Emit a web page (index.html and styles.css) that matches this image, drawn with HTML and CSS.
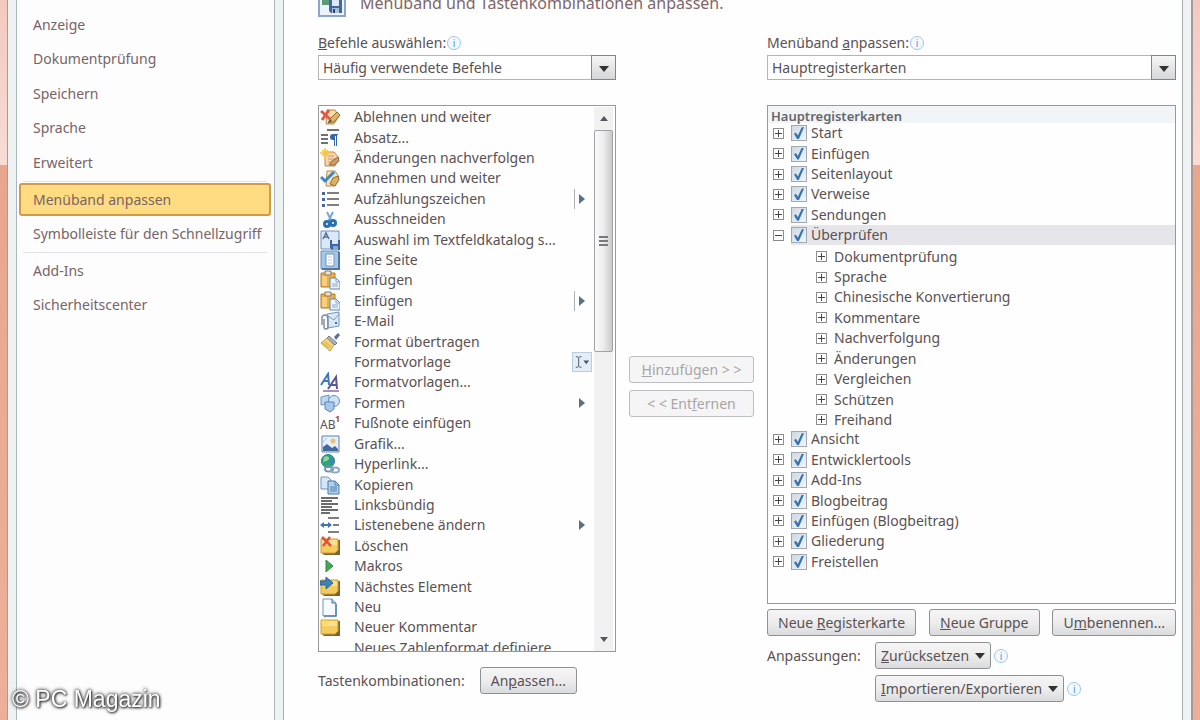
FILE: index.html
```html
<!DOCTYPE html>
<html lang="de">
  <head>
    <meta charset="utf-8" />
    <title>Menüband anpassen</title>
    <link rel="stylesheet" href="styles.css">
  </head>
  <body>
    <div class="window">
      <nav class="sidebar">
        <div class="nav-group">
          <a href="#">Anzeige</a>
          <a href="#">Dokumentprüfung</a>
          <a href="#">Speichern</a>
          <a href="#">Sprache</a>
          <a href="#">Erweitert</a>
        </div>
        <hr>
        <a href="#" class="active">Menüband anpassen</a>
        <a href="#">Symbolleiste für den Schnellzugriff</a>
        <hr>
        <a href="#">Add-Ins</a>
        <a href="#">Sicherheitscenter</a>
      </nav>

      <main class="content">
        <header class="page-header">
          <svg class="page-icon" viewBox="0 0 28 28">
            <rect x="1" y="1" width="26" height="26" fill="#edf3fa" stroke="#8ba6cb" stroke-width="2"/>
            <path d="M4 8h7v8H4z" fill="#5c9a78"/>
            <path d="M11 11h13v13H13l-2-2z" fill="#41679d"/>
            <path d="M14 11h7v6h-7z" fill="#dce8f5"/>
            <path d="M14 19h7v5h-7z" fill="#a9c0dd"/>
            <path d="M15 20h2v4h-2z" fill="#2b4777"/>
          </svg>
          <h1>Menüband und Tastenkombinationen anpassen.</h1>
        </header>

        <div class="columns">
          <!-- Available commands -->
          <section class="commands">
            <div class="field-label">
              <label for="command-source"><u>B</u>efehle auswählen:</label>
              <span class="info">i</span>
            </div>
            <div class="dropdown">
              <select id="command-source">
                <option>Häufig verwendete Befehle</option>
              </select>
              <span class="dropdown-arrow"></span>
            </div>

            <div class="listbox command-box">
              <ul class="command-list">
                <li>
                  <svg viewBox="0 0 20 20"><path d="M7 3h8l4 6-5 8H6z" fill="#f7dfa4" stroke="#b98b4b"/><path d="M8 16l3-5 6-6 3 3-6 7z" fill="#e7b45c" stroke="#8a6a3c"/><path d="M8 16l2-4 2 2z" fill="#556"/><path d="M1 4l9 8M9 3l-7 10" stroke="#dc5a47" stroke-width="3"/></svg>
                  <span>Ablehnen und weiter</span>
                </li>
                <li>
                  <svg viewBox="0 0 20 20"><path d="M7 2h12M1 7h7M1 11h7M1 15h7" stroke="#444" stroke-width="1.5"/><path d="M18 6h-5a3 3 0 0 0 0 6h1v6h1V8h1v10h1V7h1z" fill="#3568a8"/></svg>
                  <span>Absatz...</span>
                </li>
                <li>
                  <svg viewBox="0 0 20 20"><path d="M5 4h9l5 6-4 8H5z" fill="#f6d8a8" stroke="#c1895a"/><path d="M8 8h6M8 11h8M8 14h6" stroke="#d49678"/><path d="M9 17l3-4 6-4 1 4-5 4z" fill="#d99c58" stroke="#8d6a4e"/><path d="M5 0v11M0 5h11M2 2l6 6M8 2L2 8" stroke="#f7c542" stroke-width="1.5"/></svg>
                  <span>Änderungen nachverfolgen</span>
                </li>
                <li>
                  <svg viewBox="0 0 20 20"><path d="M7 3h8l4 6-5 9H6z" fill="#f3e4be" stroke="#b98b4b"/><path d="M10 16l3-6 5-2 1 4-4 6z" fill="#deb05e" stroke="#8a6a3c"/><path d="M1 9l4 4 9-9" fill="none" stroke="#3f86c4" stroke-width="3"/></svg>
                  <span>Annehmen und weiter</span>
                </li>
                <li>
                  <svg viewBox="0 0 20 20"><path d="M7 4h12M7 10h12M7 16h12" stroke="#555" stroke-width="1.5"/><path d="M2 3h3v3H2zM2 9h3v3H2zM2 15h3v3H2z" fill="#46679c"/></svg>
                  <span>Aufzählungszeichen</span>
                  <i class="submenu split"></i>
                </li>
                <li>
                  <svg viewBox="0 0 20 20"><path d="M7 3l5 10M13 3L8 13" stroke="#77a8cf" stroke-width="2"/><circle cx="7" cy="15" r="2.500" fill="none" stroke="#2770b5" stroke-width="3"/><circle cx="13" cy="14" r="2.500" fill="none" stroke="#2770b5" stroke-width="3"/></svg>
                  <span>Ausschneiden</span>
                </li>
                <li>
                  <svg viewBox="0 0 20 20"><path d="M1 1h18v18H1z" fill="#dbe9f7" stroke="#6f93bf"/><path d="M3 9l3-6 3 6M4 7h4" fill="none" stroke="#566f94" stroke-width="1.500"/><path d="M10 10h10v10H12l-2-2z" fill="#3c66a8"/><path d="M12 10h6v4h-6z" fill="#dce7f5"/><path d="M13 16h5v4h-5z" fill="#8ea9cf"/></svg>
                  <span>Auswahl im Textfeldkatalog s...</span>
                </li>
                <li>
                  <svg viewBox="0 0 20 20"><path d="M1 1h18v18H1z" fill="#a6c6e6" stroke="#6b92bd"/><path d="M19 2v17H2" fill="none" stroke="#4d77a6" stroke-width="2"/><path d="M6 4h8v12H6z" fill="#fff" stroke="#6f93bf"/><path d="M8 7h4M8 10h4M8 13h4" stroke="#b4cce4"/></svg>
                  <span>Eine Seite</span>
                </li>
                <li>
                  <svg viewBox="0 0 20 20"><g id="paste-icon"><path d="M1 3h14v14H1z" fill="#e6b04c" stroke="#b67d27"/><path d="M5 1h6v4H5z" fill="#e9e3d4" stroke="#8c7a59"/><path d="M2 6h5v10H2z" fill="#f5cf7c"/><path d="M10 8h6l4 4v7H10z" fill="#eef4fb" stroke="#6384ac"/><path d="M16 8v4h4M12 14h6M12 16h6" fill="none" stroke="#8fa9c8"/></g></svg>
                  <span>Einfügen</span>
                </li>
                <li>
                  <svg viewBox="0 0 20 20"><use href="#paste-icon"/></svg>
                  <span>Einfügen</span>
                  <i class="submenu split"></i>
                </li>
                <li>
                  <svg viewBox="0 0 20 20"><path d="M7 3l12-2v14l-11 2z" fill="#d9e8f6" stroke="#7095bb"/><path d="M8 5l6 4 5-6" fill="none" stroke="#7b9fc4"/><path d="M15 11h2v2h-2z" fill="#496f9f"/><path d="M2 14V7a3 3 0 0 1 6 0v9a2 2 0 0 1-4 0V8" fill="none" stroke="#7f8ea3" stroke-width="1.500"/></svg>
                  <span>E-Mail</span>
                </li>
                <li>
                  <svg viewBox="0 0 20 20"><path d="M14 5l4-4 2 2-4 5z" fill="#5d6e96"/><path d="M9 4l8 7-2 2-8-7z" fill="#a9b3c5" stroke="#707c95"/><path d="M7 6l7 7-4 6-9-8z" fill="#f3d377" stroke="#c99a3a"/><path d="M3 11l6 5M5 10l6 5" stroke="#d8a945"/></svg>
                  <span>Format übertragen</span>
                </li>
                <li>
                  <svg viewBox="0 0 20 20"></svg>
                  <span>Formatvorlage</span>
                  <i class="edit-mark"><svg viewBox="0 0 19 19"><path d="M3 4h2l1 1 1-1h2M3 15h2l1-1 1 1h2M6 5v9" fill="none" stroke="#44566a"/><path d="M11 8h6l-3 4z" fill="#44566a"/></svg></i>
                </li>
                <li>
                  <svg viewBox="0 0 20 20"><path d="M1 13L8 2l1 11M4 9h5" fill="none" stroke="#3b78bd" stroke-width="2"/><path d="M8 17l8-12 1 12M11 13h6" fill="none" stroke="#5b5796" stroke-width="2"/><path d="M3 19h16" stroke="#8a68b5" stroke-width="1.500"/></svg>
                  <span>Formatvorlagen...</span>
                </li>
                <li>
                  <svg viewBox="0 0 20 20"><path d="M1 4l8-2v9l-8 1z" fill="#bcd6ee" stroke="#6a93bf"/><circle cx="14" cy="8" r="5.500" fill="#cfe2f4" stroke="#6a93bf"/><path d="M5 9h9v7l-4 3-5-3z" fill="#a5c7e8" stroke="#5a87b8"/></svg>
                  <span>Formen</span>
                  <i class="submenu"></i>
                </li>
                <li>
                  <svg viewBox="0 0 20 20"><text x="0" y="16" class="ab">AB</text><text x="15" y="9" class="ab-note">1</text></svg>
                  <span>Fußnote einfügen</span>
                </li>
                <li>
                  <svg viewBox="0 0 20 20"><path d="M2 2h17v16H2z" fill="#e6f0f9" stroke="#5d81ae"/><path d="M3 17v-4l4-3 5 4 3-2 3 3v2z" fill="#426a9c"/><circle cx="13" cy="7" r="2.500" fill="#efbd78"/><path d="M3 8l4-4" stroke="#a9c5e0"/></svg>
                  <span>Grafik...</span>
                </li>
                <li>
                  <svg viewBox="0 0 20 20"><circle cx="8" cy="7" r="6.500" fill="#2fa66c" stroke="#2f7b86"/><path d="M4 3c3-2 6 0 5 2s-4 2-6 3z" fill="#8ad7a7"/><path d="M9 3l4 2 1 4-3 3z" fill="#3a87b8"/><ellipse cx="9" cy="15" rx="4" ry="2.500" fill="none" stroke="#6f91b4" stroke-width="2"/><ellipse cx="15" cy="16" rx="4" ry="2.500" fill="none" stroke="#8ba8c4" stroke-width="2"/></svg>
                  <span>Hyperlink...</span>
                </li>
                <li>
                  <svg viewBox="0 0 20 20"><path d="M1 2h7l3 3v9H1z" fill="#d5e6f6" stroke="#6d96c2"/><path d="M8 6h7l4 4v9H8z" fill="#b3d1ed" stroke="#4679ad"/><path d="M15 6v4h4M10 12h7M10 14h7M10 16h7" fill="none" stroke="#4f80b1"/></svg>
                  <span>Kopieren</span>
                </li>
                <li>
                  <svg viewBox="0 0 20 20"><path d="M1 3h17M1 6h11M1 9h17M1 12h11M1 15h17M1 18h9" stroke="#3d3d3d" stroke-width="1.500"/></svg>
                  <span>Linksbündig</span>
                </li>
                <li>
                  <svg viewBox="0 0 20 20"><path d="M8 3h11M13 10h6M8 17h11" stroke="#555" stroke-width="1.500"/><path d="M2 10h9" stroke="#3e76ae" stroke-width="2"/><path d="M0 10l4-3v6zM12 10L8 7v6z" fill="#3e76ae"/></svg>
                  <span>Listenebene ändern</span>
                  <i class="submenu"></i>
                </li>
                <li>
                  <svg viewBox="0 0 20 20"><g id="note-icon"><path d="M3 4h17v15H4l-2-2z" fill="#7d6438"/><path d="M1 3h17v11l-3 3H1z" fill="#f4cc5e" stroke="#cf9c37"/><path d="M2 4h15v5H2z" fill="#fae091"/></g><path d="M2 1l9 9M10 1L3 10" stroke="#dd5535" stroke-width="2.500"/></svg>
                  <span>Löschen</span>
                </li>
                <li>
                  <svg viewBox="0 0 20 20"><path d="M6 4l7 6-7 6z" fill="#43a850" stroke="#348a43"/></svg>
                  <span>Makros</span>
                </li>
                <li>
                  <svg viewBox="0 0 20 20"><use href="#note-icon"/><path d="M0 4h6V0l7 6-7 6V8H0z" fill="#3a83b9" stroke="#2a6797"/></svg>
                  <span>Nächstes Element</span>
                </li>
                <li>
                  <svg viewBox="0 0 20 20"><path d="M3 2h9l4 4v13H3z" fill="#f6fafe" stroke="#6c93bf"/><path d="M12 2v4h4" fill="#c3d9ee" stroke="#3f6ea4"/><path d="M16 7v12H4" fill="none" stroke="#5582b4" stroke-width="1.500"/></svg>
                  <span>Neu</span>
                </li>
                <li>
                  <svg viewBox="0 0 20 20"><use href="#note-icon"/><path d="M5 0v9M0 5h10M2 2l6 6M8 2L2 8" stroke="#f9d75e"/></svg>
                  <span>Neuer Kommentar</span>
                </li>
                <li>
                  <svg viewBox="0 0 20 20"></svg>
                  <span>Neues Zahlenformat definiere</span>
                </li>
              </ul>
              <div class="scrollbar">
                <span class="scroll-up"></span>
                <span class="scroll-thumb"></span>
                <span class="scroll-down"></span>
              </div>
            </div>

            <div class="shortcut-row">
              <span>Tastenkombinationen:</span>
              <button type="button" class="btn">An<u>p</u>assen...</button>
            </div>
          </section>

          <div class="transfer">
            <button type="button" class="btn" disabled><u>H</u>inzufügen &gt; &gt;</button>
            <button type="button" class="btn" disabled>&lt; &lt; Ent<u>f</u>ernen</button>
          </div>

          <!-- Ribbon tabs -->
          <section class="ribbon">
            <div class="field-label">
              <label for="ribbon-source">Menüband <u>a</u>npassen:</label>
              <span class="info">i</span>
            </div>
            <div class="dropdown">
              <select id="ribbon-source">
                <option>Hauptregisterkarten</option>
              </select>
              <span class="dropdown-arrow"></span>
            </div>

            <div class="listbox tree-box">
              <h2>Hauptregisterkarten</h2>
              <ul class="tree">
                <li><i class="expander"></i><label><input type="checkbox" checked>Start</label></li>
                <li><i class="expander"></i><label><input type="checkbox" checked>Einfügen</label></li>
                <li><i class="expander"></i><label><input type="checkbox" checked>Seitenlayout</label></li>
                <li><i class="expander"></i><label><input type="checkbox" checked>Verweise</label></li>
                <li><i class="expander"></i><label><input type="checkbox" checked>Sendungen</label></li>
                <li class="selected"><i class="expander open"></i><label><input type="checkbox" checked>Überprüfen</label></li>
                <li class="child"><i class="expander"></i>Dokumentprüfung</li>
                <li class="child"><i class="expander"></i>Sprache</li>
                <li class="child"><i class="expander"></i>Chinesische Konvertierung</li>
                <li class="child"><i class="expander"></i>Kommentare</li>
                <li class="child"><i class="expander"></i>Nachverfolgung</li>
                <li class="child"><i class="expander"></i>Änderungen</li>
                <li class="child"><i class="expander"></i>Vergleichen</li>
                <li class="child"><i class="expander"></i>Schützen</li>
                <li class="child"><i class="expander"></i>Freihand</li>
                <li><i class="expander"></i><label><input type="checkbox" checked>Ansicht</label></li>
                <li><i class="expander"></i><label><input type="checkbox" checked>Entwicklertools</label></li>
                <li><i class="expander"></i><label><input type="checkbox" checked>Add-Ins</label></li>
                <li><i class="expander"></i><label><input type="checkbox" checked>Blogbeitrag</label></li>
                <li><i class="expander"></i><label><input type="checkbox" checked>Einfügen (Blogbeitrag)</label></li>
                <li><i class="expander"></i><label><input type="checkbox" checked>Gliederung</label></li>
                <li><i class="expander"></i><label><input type="checkbox" checked>Freistellen</label></li>
              </ul>
            </div>

            <div class="ribbon-actions">
              <button type="button" class="btn">Neue <u>R</u>egisterkarte</button>
              <button type="button" class="btn"><u>N</u>eue Gruppe</button>
              <button type="button" class="btn">U<u>m</u>benennen...</button>
            </div>
            <div class="customize">
              <span class="customize-label">Anpassungen:</span>
              <div class="customize-row">
                <button type="button" class="btn menu"><span><u>Z</u>urücksetzen</span></button>
                <span class="info">i</span>
              </div>
              <div class="customize-row">
                <button type="button" class="btn menu"><span><u>I</u>mportieren/Exportieren</span></button>
                <span class="info">i</span>
              </div>
            </div>
          </section>
        </div>
      </main>
    </div>

    <div class="watermark">© PC Magazin</div>
  </body>
</html>
```

FILE: styles.css
```css
* {
  box-sizing: border-box;
}

body {
  margin: 0;
  height: 100vh;
  overflow: hidden;
  padding: 0 7px;
  font-family: "Noto Sans", "Segoe UI", sans-serif;
  font-size: 14px;
  line-height: 20px;
  color: #5a5153;
  background: linear-gradient(#f2c9c0, #f8dcd5 165px, #e9a68e 165px, #ecb09a);
}

ul {
  list-style: none;
  margin: 0;
  padding: 0;
}

.window {
  display: flex;
  gap: 8px;
  height: 100%;
  padding: 0 8px;
  background: #eff2f3;
  border: solid #a89a9a;
  border-width: 0 2px 0 1px;
}

/* Sidebar */
.sidebar {
  width: 259px;
  flex: none;
  padding: 8px 3px 0 2px;
  background: #fdfdfd;
  border: solid #a9b6bd;
  border-width: 0 1px;
}

.nav-group {
  display: grid;
  grid-auto-rows: 1fr;
  height: 172px;
}

.sidebar a {
  display: flex;
  align-items: center;
  height: 34px;
  padding: 0 14px;
  color: #786467;
  text-decoration: none;
  white-space: nowrap;
}

.sidebar hr {
  margin: 1px 4px;
  border: 0;
  border-top: 1px solid #e2e2e4;
}

.sidebar a.active {
  height: 33px;
  margin-bottom: 1px;
  padding: 0 12px;
  background: #ffdc81;
  border: 2px solid #cf9a49;
  border-radius: 3px;
}

/* Main area */
.content {
  flex: 1;
  min-width: 0;
  padding: 0 6px 0 34px;
  background: #fefefe;
  border: solid #a9aeb1;
  border-width: 0 1px;
}

.page-header {
  display: flex;
  align-items: flex-end;
  gap: 14px;
  height: 17px;
  margin-bottom: 17px;
}

.page-icon {
  width: 28px;
  height: 28px;
  flex: none;
}

.page-header h1 {
  margin: 0;
  font-size: 16px;
  font-weight: 400;
  line-height: 28px;
  color: #7e666c;
}

.columns {
  display: grid;
  grid-template-columns: 298fr 125px 409fr;
  gap: 13px;
}

.field-label {
  display: flex;
  align-items: center;
  gap: 1px;
  height: 18px;
  margin-bottom: 3px;
}

.info {
  width: 14px;
  height: 14px;
  border: 1px solid #9cc8e8;
  border-radius: 50%;
  font-size: 10px;
  line-height: 12px;
  text-align: center;
  color: #4d96cc;
  background: #f3f9fe;
}

.dropdown {
  position: relative;
  margin-bottom: 25px;
}

.dropdown select {
  display: block;
  width: 100%;
  height: 25px;
  padding: 0 4px;
  appearance: none;
  font: inherit;
  color: inherit;
  background: #fff;
  border: 1px solid #b4b4b4;
  border-radius: 0;
}

.dropdown-arrow {
  position: absolute;
  top: 0;
  right: 0;
  width: 25px;
  height: 25px;
  border: 1px solid #858585;
  background: linear-gradient(#f6f6f6, #d6d7d9);
  pointer-events: none;
}

.dropdown-arrow::after,
.btn.menu::after {
  content: "";
  display: block;
  border: 5px solid transparent;
  border-top: 6px solid #333;
  border-bottom: 0;
}

.dropdown-arrow::after {
  margin: 10px 7px;
}

.listbox {
  overflow: hidden;
  background: #fefefe;
  border: 1px solid #969a9e;
}

/* Command list */
.command-box {
  display: flex;
  height: 547px;
  padding: 1px 2px 0 1px;
}

.command-list {
  flex: 1;
  display: grid;
  grid-auto-rows: 1fr;
  height: 551px;
}

.command-list li {
  display: flex;
  align-items: center;
  padding-right: 2px;
  white-space: nowrap;
}

.command-list li > svg {
  width: 20px;
  height: 20px;
  margin-right: 14px;
}

.ab {
  font-size: 12px;
  fill: #555;
}

.ab-note {
  font-size: 9px;
  font-weight: 700;
  fill: #b5483a;
}

.submenu {
  display: flex;
  align-items: center;
  width: 18px;
  height: 20px;
  margin-left: auto;
  padding-left: 5px;
}

.submenu.split {
  padding-left: 4px;
  border-left: 1px solid #a9b1b8;
}

.submenu::after {
  content: "";
  border: 5px solid transparent;
  border-left: 6px solid #5b7081;
  border-right: 0;
}

.edit-mark {
  display: flex;
  margin-left: auto;
  width: 20px;
  height: 20px;
  background: #e3edf6;
  border: 1px solid #bccddd;
}

.scrollbar {
  display: flex;
  flex-direction: column;
  align-items: center;
  width: 19px;
  background: #f1f1f2;
}

.scroll-up,
.scroll-down {
  border: 4px solid transparent;
}

.scroll-up {
  margin: 9px 0;
  border-bottom: 5px solid #55585c;
  border-top: 0;
}

.scroll-down {
  margin: auto 0 9px;
  border-top: 5px solid #55585c;
  border-bottom: 0;
}

.scroll-thumb {
  display: flex;
  align-items: center;
  justify-content: center;
  width: 19px;
  height: 222px;
  background: linear-gradient(90deg, #fafafa, #ececed 50%, #c9cacc);
  border: 1px solid #a0a2a5;
  border-radius: 2px;
}

.scroll-thumb::after {
  content: "";
  width: 9px;
  height: 11px;
  background: repeating-linear-gradient(#77797c 0 2px, transparent 2px 4px);
}

.shortcut-row {
  display: flex;
  align-items: center;
  gap: 15px;
  margin-top: 15px;
}

/* Buttons */
.btn {
  height: 27px;
  padding: 0 10px;
  font: inherit;
  color: inherit;
  white-space: nowrap;
  background: linear-gradient(#f5f5f5, #ededee 50%, #dadbdd);
  border: 1px solid #8f9193;
  border-radius: 3px;
}

.btn:disabled {
  color: #a8a5a8;
  background: #f5f5f5;
  border-color: #bcbec1;
}

.btn.menu {
  display: flex;
  align-items: center;
  gap: 6px;
  padding: 0 5px;
}

.transfer {
  display: flex;
  flex-direction: column;
  gap: 7px;
  padding-top: 322px;
}

/* Ribbon tree */
.tree-box {
  height: 499px;
}

.tree-box h2 {
  height: 17px;
  margin: 0;
  padding: 0 3px;
  font-size: 13px;
  font-weight: 600;
  line-height: 20px;
  color: #66666a;
  background: #f1f5f8;
}

.tree {
  display: grid;
  grid-auto-rows: 1fr;
  height: 449px;
  line-height: 18px;
}

.tree li,
.tree label {
  display: flex;
  align-items: center;
}

.tree li {
  padding-left: 5px;
}

.tree label {
  flex: 1;
  align-self: stretch;
  margin-left: 7px;
}

.tree .selected label {
  background: #e6e6ea;
}

.tree .child {
  padding: 2px 0 0 48px;
}

.expander {
  width: 11px;
  height: 11px;
  border: 1px solid #8d8d8d;
  background:
    linear-gradient(#444, #444) center / 7px 1px no-repeat,
    linear-gradient(#444, #444) center / 1px 7px no-repeat,
    #fff;
}

.expander.open {
  background: linear-gradient(#444, #444) center / 7px 1px no-repeat, #fff;
}

.child .expander {
  margin-right: 7px;
}

.tree input {
  appearance: none;
  width: 16px;
  height: 16px;
  margin: 0 4px 0 0;
  border: 1px solid #a3a8ae;
  background: linear-gradient(135deg, #cfd9e3, #f0f5fa);
}

.tree input:checked::after {
  content: "";
  display: block;
  width: 10px;
  height: 12px;
  margin: 1px 2px;
  background: #3873ae;
  clip-path: polygon(0 55%, 20% 45%, 38% 70%, 78% 0, 100% 0, 48% 100%, 32% 100%);
}

/* Actions below the tree */
.ribbon-actions {
  display: flex;
  justify-content: space-between;
  margin: 5px 0 6px;
}

.customize {
  display: grid;
  grid-template-columns: 108px 1fr;
  row-gap: 6px;
}

.customize-label {
  align-self: center;
}

.customize-row {
  grid-column: 2;
  display: flex;
  align-items: center;
  gap: 3px;
}

.watermark {
  position: fixed;
  left: 12px;
  bottom: 8px;
  font-family: "Liberation Sans", Arial, sans-serif;
  font-size: 23px;
  line-height: 26px;
  color: #fff;
  text-shadow: 0 0 3px #333, 1px 1px 2px #444, 0 0 4px #555;
}
```
